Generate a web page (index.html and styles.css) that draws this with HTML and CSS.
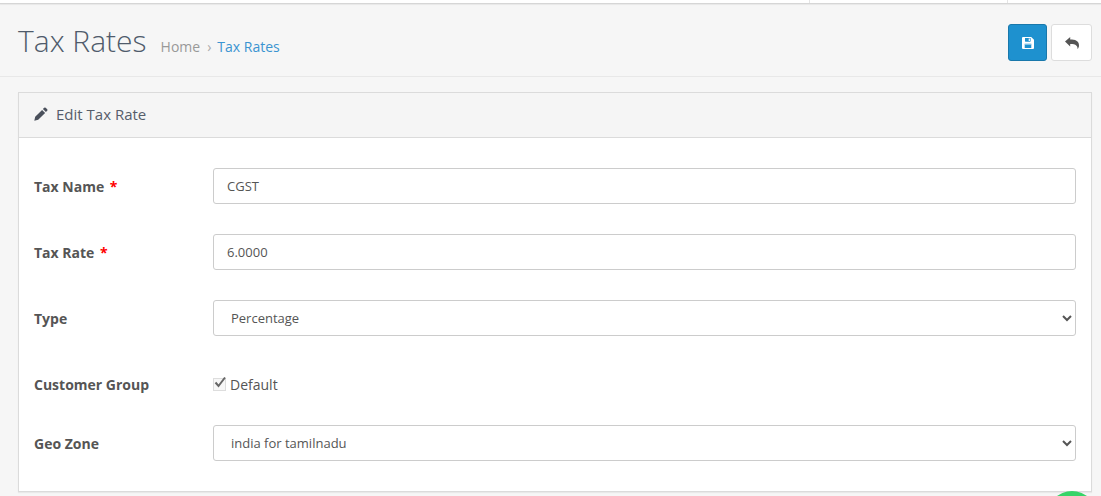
FILE: index.html
```html
<!DOCTYPE html>
<html lang="en">
<head>
<meta charset="utf-8">
<title>Tax Rates</title>
<link rel="stylesheet" href="styles.css">
</head>
<body>
<div class="topbar"><span class="tick tick-a"></span><span class="tick tick-b"></span></div>
<header class="page-header">
  <div class="title-group">
    <h1>Tax Rates</h1>
    <nav class="breadcrumb"><a class="crumb-home" href="#">Home</a><span class="crumb-sep">›</span><a class="crumb-current" href="#">Tax Rates</a></nav>
  </div>
  <div class="actions">
    <button class="btn btn-save" type="button" aria-label="Save">
      <svg width="12" height="12" viewBox="0 0 12 12"><path fill="#fff" fill-rule="evenodd" d="M1 0h8.200L12 2.800V11a1 1 0 0 1-1 1H1a1 1 0 0 1-1-1V1a1 1 0 0 1 1-1zm2 1v3.300c0 .3.200.5.500.5h4.600c.3 0 .5-.2.500-.5V1zm3.700.5h1.200v2.400H6.700zM2.700 6.800v4.200h6.600V6.800z"/><path fill="#bfe4f7" d="M2.700 6.800h6.600v.8H2.700z"/></svg>
    </button>
    <button class="btn btn-back" type="button" aria-label="Back">
      <svg width="14" height="12" viewBox="0 0 14 12"><path fill="#555" d="M0 4.500 5.200 0v2.600C10 2.600 14 3.800 14 8.400c0 1.600-.7 2.800-1.500 3.600.3-2.900-1.200-5-7.300-5v2.600z"/></svg>
    </button>
  </div>
</header>
<main class="panel">
  <div class="panel-heading">
    <svg class="pencil" width="14" height="14" viewBox="0 0 14 14"><path fill="#4a505b" d="M10.200.8a1.100 1.100 0 0 1 1.500 0l1.500 1.500a1.100 1.100 0 0 1 0 1.500l-1.300 1.300-3-3zM8.100 2.900l3 3-6.900 6.900L.3 13.700l.9-3.900z"/></svg>
    <span>Edit Tax Rate</span>
  </div>
  <form class="panel-body">
    <div class="row row-input">
      <label class="label">Tax Name <span class="req">*</span></label>
      <input class="control" type="text" value="CGST">
    </div>
    <div class="row row-input">
      <label class="label">Tax Rate <span class="req">*</span></label>
      <input class="control" type="text" value="6.0000">
    </div>
    <div class="row row-input">
      <label class="label">Type</label>
      <select class="control"><option>Percentage</option></select>
    </div>
    <div class="row row-check">
      <label class="label">Customer Group</label>
      <label class="check-label"><span class="check"><svg width="14" height="13" viewBox="0 0 14 13"><path fill="none" stroke="#666" stroke-width="2" d="M2.500 6.500 5.500 10 12 1.500"/></svg></span>Default</label>
    </div>
    <div class="row row-input row-last">
      <label class="label">Geo Zone</label>
      <select class="control"><option>india for tamilnadu</option></select>
    </div>
  </form>
</main>
<div class="fab-clip"><div class="fab"></div></div>
</body>
</html>
```

FILE: styles.css
```css
* { box-sizing: border-box; }
html, body { height: 100%; }
body {
  margin: 0;
  overflow: hidden;
  background: #f6f6f6;
  font-family: "Open Sans", sans-serif;
  font-size: 13px;
  color: #555;
  position: relative;
}
.topbar {
  height: 4px;
  background: #fff;
  border-bottom: 1px solid #d6d6d6;
  box-shadow: 0 1px 1px rgba(0,0,0,.06);
  position: relative;
}
.tick { position: absolute; top: 0; width: 1px; height: 3px; background: #e5e5e5; }
.tick-a { left: 809px; }
.tick-b { left: 1007px; }
.page-header {
  height: 73px;
  border-bottom: 1px solid #e8e8e8;
  padding: 20px 9px 0 18px;
  display: flex;
  justify-content: space-between;
  align-items: flex-start;
}
.title-group { display: flex; align-items: baseline; margin-top: -1px; }
h1 {
  margin: 0;
  font-size: 30px;
  font-weight: 300;
  line-height: 36px;
  color: #4f5b6b;
}
.breadcrumb { margin-left: 14px; font-size: 14px; display: flex; align-items: baseline; }
.crumb-home { color: #999; text-decoration: none; }
.crumb-sep { color: #aaa; margin: 0 6px 0 7px; }
.crumb-current { color: #3b94d1; text-decoration: none; }
.actions { display: flex; gap: 4px; }
.btn {
  height: 37px;
  padding: 0;
  border-radius: 3px;
  display: flex;
  align-items: center;
  justify-content: center;
}
.btn-save { background: #1e91cf; border: 1px solid #1978ab; width: 39px; }
.btn-back { background: #fff; border: 1px solid #ddd; width: 41px; }
.panel {
  margin: 15px 9px 0 18px;
  height: 400px;
  background: #fff;
  border: 1px solid #dbdbdb;
  box-shadow: 0 1px 1px rgba(0,0,0,.05);
}
.panel-heading {
  height: 45px;
  background: #f5f5f5;
  border-bottom: 1px solid #dbdbdb;
  padding: 0 0 2px 15px;
  display: flex;
  align-items: center;
  gap: 8px;
  font-size: 15px;
  color: #555d6b;
}
.panel-body { padding: 30px 15px 0; display: flex; flex-direction: column; }
.row { display: flex; align-items: center; }
.row-input { height: 36px; margin-bottom: 30px; }
.row-check { height: 29px; margin-bottom: 30px; padding-top: 8px; }
.row-last { margin-bottom: 0; }
.label { width: 179px; font-size: 14px; font-weight: 700; color: #555; flex: none; }
.req { color: #f00; margin-left: 2px; }
.control {
  width: 863px;
  flex: none;
  height: 36px;
  border: 1px solid #ccc;
  border-radius: 3px;
  background: #fff;
  padding: 0 13px;
  font-family: "Open Sans", sans-serif;
  font-size: 13px;
  color: #555;
}
.check-label { display: flex; align-items: center; font-size: 14px; color: #555; }
.check {
  width: 13px;
  height: 13px;
  margin-right: 4px;
  border: 1px solid #ddd;
  background: #f7f7f7;
  position: relative;
}
.check svg { position: absolute; left: -1px; top: -3px; }
.fab-clip {
  position: absolute;
  left: 1047px;
  top: 491px;
  width: 50px;
  height: 5px;
  overflow: hidden;
}
.fab {
  width: 50px;
  height: 50px;
  border-radius: 50%;
  background: #37d468;
}
```
